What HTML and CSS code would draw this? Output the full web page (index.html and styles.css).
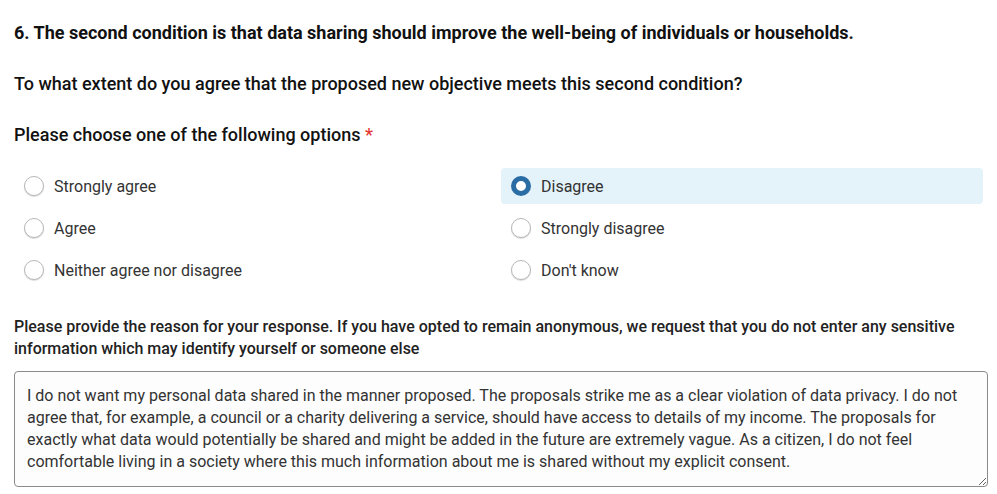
FILE: index.html
```html
<!DOCTYPE html>
<html lang="en">
<head>
    <meta charset="UTF-8">
    <title>Question 6</title>
    <link rel="stylesheet" href="styles.css">
</head>
<body>
    <div class="question">
        <h3 class="title">6. The second condition is that data sharing should improve the well-being of individuals or households.</h3>
        <p class="subtitle">To what extent do you agree that the proposed new objective meets this second condition?</p>
        <p class="prompt">Please choose one of the following options <span class="req">*</span></p>

        <div class="options">
            <label class="option"><span class="radio"></span>Strongly agree</label>
            <label class="option selected"><span class="radio"></span>Disagree</label>
            <label class="option"><span class="radio"></span>Agree</label>
            <label class="option"><span class="radio"></span>Strongly disagree</label>
            <label class="option"><span class="radio"></span>Neither agree nor disagree</label>
            <label class="option"><span class="radio"></span>Don't know</label>
        </div>

        <label class="reason-label" for="reason">Please provide the reason for your response. If you have opted to remain anonymous, we request that you do not enter any sensitive information which may identify yourself or someone else</label>
        <textarea id="reason" class="reason">I do not want my personal data shared in the manner proposed. The proposals strike me as a clear violation of data privacy. I do not agree that, for example, a council or a charity delivering a service, should have access to details of my income. The proposals for exactly what data would potentially be shared and might be added in the future are extremely vague. As a citizen, I do not feel comfortable living in a society where this much information about me is shared without my explicit consent.</textarea>
    </div>
</body>
</html>
```

FILE: styles.css
```css
body {
    margin: 0;
    padding: 0 14px;
    font-family: Roboto, "Liberation Sans", Arial, sans-serif;
    color: #222;
    background: #fff;
}
.title {
    font-size: 18px;
    font-weight: bold;
    line-height: 22px;
    margin: 22px 0 0;
    color: #111;
}
.subtitle {
    font-size: 18px;
    font-weight: 500;
    line-height: 22px;
    margin: 29px 0 0;
    color: #111;
}
.prompt {
    font-size: 18px;
    font-weight: 500;
    line-height: 22px;
    margin: 29px 0 0;
    color: #111;
}
.req {
    color: #e53935;
}
.options {
    display: grid;
    grid-template-columns: 1fr 1fr;
    column-gap: 5px;
    row-gap: 6px;
    margin-top: 22px;
    width: 969px;
}
.option {
    display: flex;
    align-items: center;
    height: 36px;
    padding-left: 10px;
    border-radius: 4px;
    font-size: 16px;
    color: #333;
}
.option.selected {
    background: #e4f2fa;
}
.radio {
    width: 18px;
    height: 18px;
    border: 1px solid #b8b8b8;
    border-radius: 50%;
    background: #fff;
    box-shadow: 0 1px 1px rgba(0, 0, 0, 0.15);
    margin-right: 10px;
    box-sizing: content-box;
}
.selected .radio {
    width: 10px;
    height: 10px;
    border: 5px solid #2a6ca4;
    box-shadow: none;
}
.reason-label {
    display: block;
    font-size: 16px;
    font-weight: 500;
    line-height: 22px;
    margin-top: 28px;
    color: #222;
}
.reason {
    display: block;
    box-sizing: border-box;
    width: 974px;
    height: 116px;
    margin-top: 11px;
    padding: 13px 12px;
    border: 1px solid #8a8a8a;
    border-radius: 4px;
    background: #fdfdfd;
    font-family: Roboto, "Liberation Sans", Arial, sans-serif;
    font-size: 16px;
    line-height: 22px;
    color: #333;
    resize: vertical;
}
```
